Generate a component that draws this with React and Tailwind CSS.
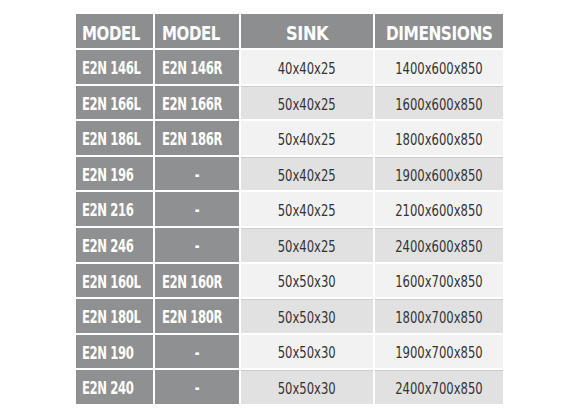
import React from 'react';

const rows = [
  ['E2N 146L', 'E2N 146R', '40x40x25', '1400x600x850'],
  ['E2N 166L', 'E2N 166R', '50x40x25', '1600x600x850'],
  ['E2N 186L', 'E2N 186R', '50x40x25', '1800x600x850'],
  ['E2N 196', '-', '50x40x25', '1900x600x850'],
  ['E2N 216', '-', '50x40x25', '2100x600x850'],
  ['E2N 246', '-', '50x40x25', '2400x600x850'],
  ['E2N 160L', 'E2N 160R', '50x50x30', '1600x700x850'],
  ['E2N 180L', 'E2N 180R', '50x50x30', '1800x700x850'],
  ['E2N 190', '-', '50x50x30', '1900x700x850'],
  ['E2N 240', '-', '50x50x30', '2400x700x850'],
];

const font = { fontFamily: '"DejaVu Sans", sans-serif' };

export default function App() {
  return (
    <div className="w-[580px] h-[420px] bg-white pt-[14px] pl-[76px] font-stretch-condensed whitespace-nowrap" style={font}>
      <div className="flex flex-col gap-[2px] w-[427px]">
        {/* header */}
        <div className="grid grid-cols-[77px_84px_132px_128px] gap-x-[2px] h-[34px] text-white font-bold text-[19px] tracking-[-0.5px]">
          <div className="bg-[#8d8e90] pl-[6px] pt-[5px] flex items-center">
            <span className="inline-block origin-left scale-x-[0.88]">MODEL</span>
          </div>
          <div className="bg-[#8d8e90] pl-[7px] pt-[5px] flex items-center">
            <span className="inline-block origin-left scale-x-[0.88]">MODEL</span>
          </div>
          <div className="bg-[#8d8e90] pt-[5px] flex items-center justify-center">
            <span className="inline-block scale-x-[0.95]">SINK</span>
          </div>
          <div className="bg-[#8d8e90] pt-[5px] flex items-center justify-center">
            <span className="inline-block scale-x-[0.9]">DIMENSIONS</span>
          </div>
        </div>

        {rows.map((r, i) => {
          const light = i % 2 === 0;
          const dataBg = light ? 'bg-[#f2f2f2]' : 'bg-[#e1e1e1] border-t border-[#cdcdcd]';
          const dash = r[1] === '-';
          return (
            <div key={i} className="grid grid-cols-[77px_84px_132px_128px] gap-x-[2px] h-[33.6px]">
              <div className="bg-[#8f9092] text-white font-bold text-[17px] tracking-[-0.5px] pl-[6px] pt-[4px] flex items-center">
                <span className="inline-block origin-left scale-x-[0.76]">{r[0]}</span>
              </div>
              <div className={`bg-[#8f9092] text-white font-bold text-[17px] tracking-[-0.5px] pt-[4px] flex items-center ${dash ? 'justify-center' : 'pl-[7px]'}`}>
                <span className={`inline-block scale-x-[0.76] ${dash ? '' : 'origin-left'}`}>{r[1]}</span>
              </div>
              <div className={`${dataBg} text-[#333333] text-[15px] pt-[4px] flex items-center justify-center`}>
                <span className="inline-block scale-x-[0.86]">{r[2]}</span>
              </div>
              <div className={`${dataBg} text-[#333333] text-[15px] pt-[4px] flex items-center justify-center`}>
                <span className="inline-block scale-x-[0.86]">{r[3]}</span>
              </div>
            </div>
          );
        })}
      </div>
    </div>
  );
}
